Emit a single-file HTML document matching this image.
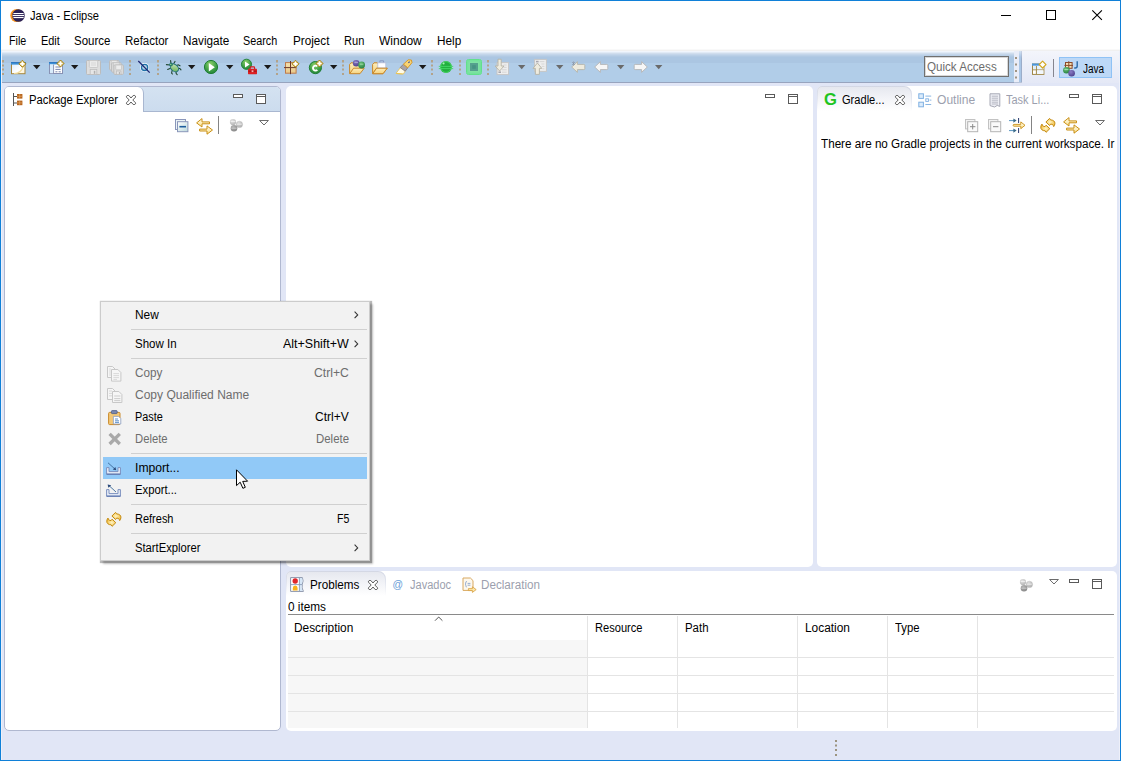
<!DOCTYPE html>
<html><head><meta charset='utf-8'><title>Java - Eclipse</title><style>
html,body{margin:0;padding:0}
body{width:1121px;height:761px;overflow:hidden;position:relative;background:#e1e6f6;font-family:"Liberation Sans", sans-serif;font-size:12px}
.a{position:absolute}
.t{position:absolute;white-space:pre;line-height:14px;transform-origin:0 0;display:block}
svg{position:absolute;overflow:visible}
.panel{position:absolute;background:#fff;border-radius:5px;box-sizing:border-box}
</style></head><body>
<div class="a" style="left:0px;top:0px;width:1121px;height:30px;background:#fff"></div>
<div class="a" style="left:0px;top:30px;width:1121px;height:20px;background:#fff"></div>
<div class="a" style="left:0px;top:49px;width:1121px;height:34px;background:linear-gradient(#f9f9f9 0px,#f9f9f9 1px,#f0f0f0 1px,#f0f0f0 2px,#f0f5fc 2px,#f0f5fc 3px,#e0eaf6 3px,#e0eaf6 4px,#cfdded 4px,#cfdded 5px,#c3d5ea 5px,#c3d5ea 6px,#b9cfe6 6px,#b9cfe6 7px,#b1c9e3 7px,#b1c9e3 8px,#abc6e2 8px,#abc6e2 14px,#b1cde8 14px,#b1cde8 33px,#98a4be 33px,#98a4be 34px)"></div>
<div class="a" style="left:1014px;top:51px;width:107px;height:32px;background:linear-gradient(#f3f5fb,#e4e8f6)"></div>
<div class="a" style="left:1014px;top:51px;width:5px;height:32px;background:#e9edf8"></div>
<div class="a" style="left:1019px;top:51px;width:2px;height:32px;background:linear-gradient(#d4e2f2,#a9c6e6 6px,#a9c6e6)"></div>
<div class="a" style="left:1021px;top:51px;width:1px;height:32px;background:linear-gradient(#c9d3e6,#9badc9 8px,#9badc9)"></div>
<div class="a" style="left:1014px;top:82px;width:8px;height:1px;background:#b9c4d8"></div>
<div class="panel" style="left:4px;top:86px;width:277px;height:645px;border:1px solid #b0b8d0;border-radius:5px 5px 5px 5px;background:#fff"></div>
<div class="a" style="left:5px;top:87px;width:275px;height:24px;background:linear-gradient(#d4e2f1,#ccdcee);border-bottom:1px solid #a9b7d0;border-radius:4px 4px 0 0;box-sizing:content-box"></div>
<div class="a" style="left:5px;top:87px;width:138px;height:25px;background:#fff;border-right:1px solid #a9b7d0;border-radius:4px 6px 0 0"></div>
<div class="panel" style="left:286px;top:86px;width:527px;height:481px;"></div>
<div class="panel" style="left:817px;top:86px;width:300px;height:481px;"></div>
<div class="a" style="left:817px;top:86px;width:95px;height:25px;background:linear-gradient(#d3d7e4,#e4e7f0 50%,#ffffff);border-radius:5px 8px 0 0"></div>
<div class="a" style="left:818px;top:87px;width:93px;height:24px;background:linear-gradient(#e6e8ef,#f3f4f8 50%,#ffffff);border-radius:4px 7px 0 0"></div>
<div class="panel" style="left:286px;top:571px;width:831px;height:160px;"></div>
<div class="a" style="left:286px;top:571px;width:100px;height:25px;background:linear-gradient(#d3d7e4,#e4e7f0 50%,#ffffff);border-radius:5px 8px 0 0"></div>
<div class="a" style="left:287px;top:572px;width:98px;height:24px;background:linear-gradient(#e6e8ef,#f3f4f8 50%,#ffffff);border-radius:4px 7px 0 0"></div>
<div class="a" style="left:288px;top:614px;width:826px;height:1px;background:#8a8a8a"></div>
<div class="a" style="left:288px;top:640px;width:299px;height:88px;background:#f7f7f7"></div>
<div class="a" style="left:288px;top:657px;width:826px;height:1px;background:#e4e4e4"></div>
<div class="a" style="left:288px;top:675px;width:826px;height:1px;background:#e4e4e4"></div>
<div class="a" style="left:288px;top:693px;width:826px;height:1px;background:#e4e4e4"></div>
<div class="a" style="left:288px;top:711px;width:826px;height:1px;background:#e4e4e4"></div>
<div class="a" style="left:587px;top:616px;width:1px;height:112px;background:#e4e4e4"></div>
<div class="a" style="left:677px;top:616px;width:1px;height:112px;background:#e4e4e4"></div>
<div class="a" style="left:797px;top:616px;width:1px;height:112px;background:#e4e4e4"></div>
<div class="a" style="left:887px;top:616px;width:1px;height:112px;background:#e4e4e4"></div>
<div class="a" style="left:977px;top:616px;width:1px;height:112px;background:#e4e4e4"></div>
<svg style="left:434px;top:616px" width="10" height="6" viewBox="0 0 10 6"><path d="M1 4.7 L4.7 1 L8.4 4.7" fill="none" stroke="#555" stroke-width="1"/></svg>
<div class="a" style="left:924px;top:56px;width:85px;height:21px;background:#fff;border:1px solid #707070;box-sizing:border-box;box-shadow:inset 0 0 0 1px #d8d8d8"></div>
<div class="a" style="left:1059px;top:57px;width:53px;height:21px;background:#bcd8f7;border:1px solid #8fc2f5;box-sizing:border-box"></div>
<div class="a" style="left:1053px;top:59px;width:1px;height:18px;background:#85858f"></div>
<svg width="0" height="0" style="left:0;top:0"><defs>
<radialGradient id="gG" cx="0.45" cy="0.3" r="0.75"><stop offset="0" stop-color="#8fd06a"/><stop offset="0.6" stop-color="#3fa047"/><stop offset="1" stop-color="#1f7f35"/></radialGradient>
<radialGradient id="gP" cx="0.4" cy="0.3" r="0.8"><stop offset="0" stop-color="#8a7cc4"/><stop offset="1" stop-color="#473a86"/></radialGradient>
<radialGradient id="gGr" cx="0.4" cy="0.3" r="0.8"><stop offset="0" stop-color="#6cc07a"/><stop offset="1" stop-color="#1f7a3a"/></radialGradient>
<linearGradient id="gFold" x1="0" y1="0" x2="0" y2="1"><stop offset="0" stop-color="#fdeebb"/><stop offset="1" stop-color="#f6d27c"/></linearGradient>
<linearGradient id="gWin" x1="0" y1="0" x2="1" y2="1"><stop offset="0" stop-color="#dcecfb"/><stop offset="0.6" stop-color="#ffffff"/><stop offset="1" stop-color="#fbf1cf"/></linearGradient>
<linearGradient id="gPk" x1="0" y1="0" x2="0" y2="1"><stop offset="0" stop-color="#f5e2ae"/><stop offset="1" stop-color="#e8c98a"/></linearGradient>
<linearGradient id="gCol" x1="0" y1="0" x2="1" y2="1"><stop offset="0" stop-color="#ffffff"/><stop offset="1" stop-color="#bcd9dc"/></linearGradient>
<linearGradient id="gBug" x1="0" y1="0" x2="1" y2="1"><stop offset="0" stop-color="#d8efc4"/><stop offset="1" stop-color="#5aa84a"/></linearGradient>
<radialGradient id="gBall1" cx="0.4" cy="0.3" r="0.8"><stop offset="0" stop-color="#dedede"/><stop offset="1" stop-color="#a8a8a8"/></radialGradient>
<radialGradient id="gBall2" cx="0.4" cy="0.3" r="0.8"><stop offset="0" stop-color="#b4b4b4"/><stop offset="1" stop-color="#828282"/></radialGradient>
<linearGradient id="gYel" x1="0" y1="0" x2="0" y2="1"><stop offset="0" stop-color="#fffdf0"/><stop offset="1" stop-color="#fbe08a"/></linearGradient>
<radialGradient id="gRef" cx="0.45" cy="0.45" r="0.6"><stop offset="0" stop-color="#fff4c4"/><stop offset="1" stop-color="#f2bc3a"/></radialGradient>
</defs></svg>
<svg style="left:10px;top:8px" width="16" height="16" viewBox="0 0 16 16"><circle cx="6.9" cy="7.5" r="6.6" fill="#f7941e"/><circle cx="8.5" cy="7.5" r="6.3" fill="#2c2255"/><rect x="3.4" y="5" width="10.2" height="1.1" fill="#fff"/><rect x="2.6" y="7" width="11.6" height="1.1" fill="#fff"/><rect x="3.4" y="9" width="10.2" height="1.1" fill="#fff"/></svg>
<svg style="left:1001px;top:10px" width="12" height="12" viewBox="0 0 12 12"><path d="M0 5.5 H10" stroke="#000" stroke-width="1"/></svg>
<svg style="left:1046px;top:10px" width="12" height="12" viewBox="0 0 12 12"><rect x="0.5" y="0.5" width="9" height="9" fill="none" stroke="#000" stroke-width="1"/></svg>
<svg style="left:1092px;top:10px" width="12" height="12" viewBox="0 0 12 12"><path d="M0.3 0.3 L9.9 9.9 M9.9 0.3 L0.3 9.9" stroke="#000" stroke-width="1.1"/></svg>
<svg style="left:2px;top:59.5px" width="3" height="16" viewBox="0 0 3 16"><rect x="0" y="0" width="2" height="2.5" fill="#b3a38a"/><rect x="0" y="4.5" width="2" height="2" fill="#b3a38a"/><rect x="0" y="8.5" width="2" height="2" fill="#b3a38a"/><rect x="0" y="13" width="2" height="2" fill="#b3a38a"/></svg>
<svg style="left:129px;top:59.5px" width="3" height="16" viewBox="0 0 3 16"><rect x="0" y="0" width="2" height="2.5" fill="#b3a38a"/><rect x="0" y="4.5" width="2" height="2" fill="#b3a38a"/><rect x="0" y="8.5" width="2" height="2" fill="#b3a38a"/><rect x="0" y="13" width="2" height="2" fill="#b3a38a"/></svg>
<svg style="left:157px;top:59.5px" width="3" height="16" viewBox="0 0 3 16"><rect x="0" y="0" width="2" height="2.5" fill="#b3a38a"/><rect x="0" y="4.5" width="2" height="2" fill="#b3a38a"/><rect x="0" y="8.5" width="2" height="2" fill="#b3a38a"/><rect x="0" y="13" width="2" height="2" fill="#b3a38a"/></svg>
<svg style="left:276px;top:59.5px" width="3" height="16" viewBox="0 0 3 16"><rect x="0" y="0" width="2" height="2.5" fill="#b3a38a"/><rect x="0" y="4.5" width="2" height="2" fill="#b3a38a"/><rect x="0" y="8.5" width="2" height="2" fill="#b3a38a"/><rect x="0" y="13" width="2" height="2" fill="#b3a38a"/></svg>
<svg style="left:342px;top:59.5px" width="3" height="16" viewBox="0 0 3 16"><rect x="0" y="0" width="2" height="2.5" fill="#b3a38a"/><rect x="0" y="4.5" width="2" height="2" fill="#b3a38a"/><rect x="0" y="8.5" width="2" height="2" fill="#b3a38a"/><rect x="0" y="13" width="2" height="2" fill="#b3a38a"/></svg>
<svg style="left:431px;top:59.5px" width="3" height="16" viewBox="0 0 3 16"><rect x="0" y="0" width="2" height="2.5" fill="#b3a38a"/><rect x="0" y="4.5" width="2" height="2" fill="#b3a38a"/><rect x="0" y="8.5" width="2" height="2" fill="#b3a38a"/><rect x="0" y="13" width="2" height="2" fill="#b3a38a"/></svg>
<svg style="left:459px;top:59.5px" width="3" height="16" viewBox="0 0 3 16"><rect x="0" y="0" width="2" height="2.5" fill="#b3a38a"/><rect x="0" y="4.5" width="2" height="2" fill="#b3a38a"/><rect x="0" y="8.5" width="2" height="2" fill="#b3a38a"/><rect x="0" y="13" width="2" height="2" fill="#b3a38a"/></svg>
<svg style="left:487px;top:59.5px" width="3" height="16" viewBox="0 0 3 16"><rect x="0" y="0" width="2" height="2.5" fill="#b3a38a"/><rect x="0" y="4.5" width="2" height="2" fill="#b3a38a"/><rect x="0" y="8.5" width="2" height="2" fill="#b3a38a"/><rect x="0" y="13" width="2" height="2" fill="#b3a38a"/></svg>
<svg style="left:33px;top:65px" width="8" height="5" viewBox="0 0 8 5"><path d="M0 0 H7.4 L3.7 4.3 Z" fill="#1a1a1a"/></svg>
<svg style="left:71px;top:65px" width="8" height="5" viewBox="0 0 8 5"><path d="M0 0 H7.4 L3.7 4.3 Z" fill="#1a1a1a"/></svg>
<svg style="left:188px;top:65px" width="8" height="5" viewBox="0 0 8 5"><path d="M0 0 H7.4 L3.7 4.3 Z" fill="#1a1a1a"/></svg>
<svg style="left:226px;top:65px" width="8" height="5" viewBox="0 0 8 5"><path d="M0 0 H7.4 L3.7 4.3 Z" fill="#1a1a1a"/></svg>
<svg style="left:264px;top:65px" width="8" height="5" viewBox="0 0 8 5"><path d="M0 0 H7.4 L3.7 4.3 Z" fill="#1a1a1a"/></svg>
<svg style="left:330px;top:65px" width="8" height="5" viewBox="0 0 8 5"><path d="M0 0 H7.4 L3.7 4.3 Z" fill="#1a1a1a"/></svg>
<svg style="left:419px;top:65px" width="8" height="5" viewBox="0 0 8 5"><path d="M0 0 H7.4 L3.7 4.3 Z" fill="#1a1a1a"/></svg>
<svg style="left:518px;top:65px" width="8" height="5" viewBox="0 0 8 5"><path d="M0 0 H7.4 L3.7 4.3 Z" fill="#6a6a6a"/></svg>
<svg style="left:556px;top:65px" width="8" height="5" viewBox="0 0 8 5"><path d="M0 0 H7.4 L3.7 4.3 Z" fill="#6a6a6a"/></svg>
<svg style="left:617px;top:65px" width="8" height="5" viewBox="0 0 8 5"><path d="M0 0 H7.4 L3.7 4.3 Z" fill="#6a6a6a"/></svg>
<svg style="left:655px;top:65px" width="8" height="5" viewBox="0 0 8 5"><path d="M0 0 H7.4 L3.7 4.3 Z" fill="#6a6a6a"/></svg>
<svg style="left:1015px;top:56.5px" width="2" height="22" viewBox="0 0 2 22"><rect x="0" y="0" width="2" height="2" fill="#a09482"/><rect x="0" y="6.5" width="2" height="2" fill="#a09482"/><rect x="0" y="13" width="2" height="2" fill="#a09482"/><rect x="0" y="19.5" width="2" height="2" fill="#a09482"/></svg>
<svg style="left:10px;top:59px" width="17" height="16" viewBox="0 0 17 16"><rect x="1.5" y="3.5" width="13.5" height="11.2" fill="url(#gWin)" stroke="#a8873c" stroke-width="1"/><rect x="1" y="3" width="14.5" height="2.6" fill="#3b8fd6"/><rect x="1" y="3" width="14.5" height="1" fill="#2f77c0"/><path d="M4 14.5 C9 14.5 12 12 13.5 7" fill="none" stroke="#f3dc9a" stroke-width="1.2"/><path d="M12.4 1.2999999999999998 L15.9 4.8 L12.4 8.3 L8.9 4.8 Z" fill="#d9b23c" stroke="#a6821a" stroke-width="1" stroke-linejoin="round"/><path d="M12.4 2.5999999999999996 V7.000000000000001 M10.200000000000001 4.8 H14.6" stroke="#ffffff" stroke-width="1.7" fill="none"/></svg>
<svg style="left:48px;top:59px" width="17" height="16" viewBox="0 0 17 16"><rect x="1.5" y="3.5" width="13" height="11" fill="#fff" stroke="#8892b4" stroke-width="1"/><rect x="1" y="3" width="14" height="2.4" fill="#3b8fd6"/><rect x="1" y="3" width="14" height="1" fill="#2f77c0"/><rect x="2" y="5.6" width="3" height="8.6" fill="#d9ecfb"/><path d="M5.6 5.6 V14.4" stroke="#8892b4" stroke-width="1"/><path d="M7.4 8 H12.6 M7.4 10.4 H12.6 M7.4 12.8 H9.4 M10.6 12.8 H12.8" stroke="#7886ad" stroke-width="1"/><path d="M12.5 1.0 L16.0 4.5 L12.5 8.0 L9.0 4.5 Z" fill="#d9b23c" stroke="#a6821a" stroke-width="1" stroke-linejoin="round"/><path d="M12.5 2.3 V6.7 M10.3 4.5 H14.7" stroke="#ffffff" stroke-width="1.7" fill="none"/></svg>
<svg style="left:86px;top:60px" width="15" height="15" viewBox="0 0 15 15"><rect x="0.5" y="0.5" width="14" height="14" rx="1" fill="#dedede" stroke="#bcbcbc" stroke-width="1"/><rect x="3.3" y="0.6" width="8.4" height="6.9" rx="0.8" fill="#ececec" stroke="#c4c4c4" stroke-width="0.8"/><rect x="4.2" y="9.45" width="6.6" height="4.95" fill="#e6e6e6" stroke="#bdbdbd" stroke-width="0.8"/><rect x="7.800000000000001" y="10.799999999999999" width="1.5" height="3.0" fill="#b0b0b0"/><path d="M5 3 H10 M5 5 H10" stroke="#cfcfcf" stroke-width="0.7"/></svg>
<svg style="left:109px;top:60px" width="15" height="15" viewBox="0 0 15 15"><rect x="0.5" y="0.5" width="9.5" height="9.5" rx="1" fill="#dedede" stroke="#bcbcbc" stroke-width="1"/><rect x="2.31" y="0.6" width="5.880000000000001" height="4.83" rx="0.8" fill="#ececec" stroke="#c4c4c4" stroke-width="0.8"/><rect x="2.9400000000000004" y="6.615" width="4.62" height="3.2849999999999997" fill="#e6e6e6" stroke="#bdbdbd" stroke-width="0.8"/><rect x="5.46" y="7.56" width="1.05" height="2.1" fill="#b0b0b0"/><rect x="2.7" y="2.7" width="9.5" height="9.5" rx="1" fill="#dedede" stroke="#bcbcbc" stroke-width="1"/><rect x="4.51" y="2.8000000000000003" width="5.880000000000001" height="4.83" rx="0.8" fill="#ececec" stroke="#c4c4c4" stroke-width="0.8"/><rect x="5.140000000000001" y="8.815000000000001" width="4.62" height="3.2849999999999997" fill="#e6e6e6" stroke="#bdbdbd" stroke-width="0.8"/><rect x="7.66" y="9.76" width="1.05" height="2.1" fill="#b0b0b0"/><rect x="4.9" y="4.9" width="9.5" height="9.5" rx="1" fill="#dedede" stroke="#bcbcbc" stroke-width="1"/><rect x="6.710000000000001" y="5.0" width="5.880000000000001" height="4.83" rx="0.8" fill="#ececec" stroke="#c4c4c4" stroke-width="0.8"/><rect x="7.340000000000001" y="11.015" width="4.62" height="3.2849999999999997" fill="#e6e6e6" stroke="#bdbdbd" stroke-width="0.8"/><rect x="9.86" y="11.96" width="1.05" height="2.1" fill="#b0b0b0"/></svg>
<svg style="left:137px;top:60px" width="14" height="14" viewBox="0 0 14 14"><circle cx="7.6" cy="7.4" r="4.4" fill="#fff"/><circle cx="7.6" cy="7.4" r="3.1" fill="#b5d6e6" stroke="#1f70a8" stroke-width="1.3"/><path d="M1.3 1 L12.7 12.6" stroke="#1c2370" stroke-width="1.2"/></svg>
<svg style="left:165px;top:59px" width="17" height="17" viewBox="0 0 17 17"><g stroke="#1f4630" stroke-width="1.1" fill="none" stroke-linecap="round"><path d="M6 4.8 L5.6 1.6"/><path d="M8.8 4.6 L10 2.4"/><path d="M5 6 L1.4 5.6"/><path d="M5.6 9.2 L2.6 10.4"/><path d="M7.2 11.4 L6.6 14 L7.4 15"/><path d="M11.6 6.4 L13.2 5.8 L15 6.8"/><path d="M13 9.2 L14.8 9.4 L16 10.8"/><path d="M11 12.6 L11.2 14.6 L12.2 15.6"/></g><ellipse cx="9.4" cy="8.8" rx="4.6" ry="3.3" transform="rotate(42 9.4 8.8)" fill="url(#gBug)" stroke="#1f6f7a" stroke-width="1"/><circle cx="6" cy="5.6" r="1.5" fill="#2f8f4a" stroke="#1f6f7a" stroke-width="0.7"/><circle cx="5.8" cy="5.2" r="0.5" fill="#e8ffe8"/></svg>
<svg style="left:203px;top:59px" width="16" height="16" viewBox="0 0 16 16"><circle cx="8" cy="8" r="6.6" fill="url(#gG)" stroke="#1f7f35" stroke-width="1"/><path d="M5.8 4 V12.6 L11.8 8.3 Z" fill="#fff"/></svg>
<svg style="left:240px;top:58px" width="18" height="17" viewBox="0 0 18 17"><circle cx="6.5" cy="6.3" r="5.1" fill="url(#gG)" stroke="#1f7f35" stroke-width="0.9"/><path d="M5 3.4 V9.4 L9.6 6.4 Z" fill="#fff"/><rect x="10.2" y="8.9" width="4.4" height="3" rx="0.8" fill="none" stroke="#d8181c" stroke-width="1.1"/><rect x="8" y="10.8" width="9" height="5.4" rx="0.6" fill="#dc1f22"/><path d="M8.4 13.2 H16.6" stroke="#8e0f12" stroke-width="0.8"/><rect x="11.6" y="12.3" width="1.8" height="1.8" fill="#f6b0b0"/></svg>
<svg style="left:283px;top:59px" width="17" height="16" viewBox="0 0 17 16"><rect x="2.5" y="3.6" width="10.6" height="10.6" fill="url(#gPk)" stroke="#bf7b4a" stroke-width="1"/><path d="M7.5 2 V15.2 M1 8.6 H13.2" stroke="#6e3a2a" stroke-width="1"/><path d="M12.5 1.2999999999999998 L16.0 4.8 L12.5 8.3 L9.0 4.8 Z" fill="#d9b23c" stroke="#a6821a" stroke-width="1" stroke-linejoin="round"/><path d="M12.5 2.5999999999999996 V7.000000000000001 M10.3 4.8 H14.7" stroke="#ffffff" stroke-width="1.7" fill="none"/></svg>
<svg style="left:308px;top:59px" width="17" height="16" viewBox="0 0 17 16"><circle cx="7.4" cy="8.6" r="6.1" fill="url(#gG)" stroke="#1f7f35" stroke-width="1"/><path d="M9.3 7.4 A2.5 2.5 0 1 0 9.3 10.8" fill="none" stroke="#fff" stroke-width="1.9"/><path d="M11.5 1.0 L15.0 4.5 L11.5 8.0 L8.0 4.5 Z" fill="#d9b23c" stroke="#a6821a" stroke-width="1" stroke-linejoin="round"/><path d="M11.5 2.3 V6.7 M9.3 4.5 H13.7" stroke="#ffffff" stroke-width="1.7" fill="none"/></svg>
<svg style="left:349px;top:59px" width="17" height="16" viewBox="0 0 17 16"><path d="M0.6 14.6 V5.4 L2 3.8000000000000003 H5.4 L6.6 5.2 H11.8 V8.6" fill="url(#gFold)" stroke="#c8872a" stroke-width="1" stroke-linejoin="round"/><path d="M0.7 14.7 L4.6 9.2 H15.2 L11 14.7 Z" fill="url(#gFold)" stroke="#c8872a" stroke-width="1" stroke-linejoin="round"/><circle cx="7.2" cy="4.2" r="3.3" fill="url(#gP)"/><path d="M5.4 3.4 H9" stroke="#b8b0e0" stroke-width="0.8"/><circle cx="12.6" cy="6" r="3.4" fill="url(#gGr)"/><path d="M10.8 5.2 H14.4" stroke="#a8e0b0" stroke-width="0.8"/></svg>
<svg style="left:372px;top:59px" width="17" height="16" viewBox="0 0 17 16"><path d="M0.6 14.6 V5.4 L2 3.8000000000000003 H5.4 L6.6 5.2 H11.8 V8.6" fill="url(#gFold)" stroke="#c8872a" stroke-width="1" stroke-linejoin="round"/><path d="M0.7 14.7 L4.6 9.2 H15.2 L11 14.7 Z" fill="url(#gFold)" stroke="#c8872a" stroke-width="1" stroke-linejoin="round"/><rect x="7.8" y="1.8" width="3.8" height="2.4" rx="0.8" fill="none" stroke="#8a9ac4" stroke-width="1.1"/><rect x="5.8" y="3.8" width="8" height="5.2" fill="#fdfdff" stroke="#b4bcd8" stroke-width="0.8"/><path d="M0.7 14.7 L4.6 9.2 H15.2 L11 14.7 Z" fill="url(#gFold)" stroke="#c8872a" stroke-width="1" stroke-linejoin="round"/></svg>
<svg style="left:395px;top:59px" width="18" height="16" viewBox="0 0 18 16"><path d="M1 14.4 L6 7.8 L10.6 11.4 L8.4 15 Z" fill="#fffbe8" stroke="#e8c050" stroke-width="0.8"/><path d="M5.2 8.6 L8.4 5.2 L12.8 8.8 L10.2 12.2 Z" fill="#a9a3a6" stroke="#807878" stroke-width="0.8"/><path d="M8.4 5.2 L13.2 0.8 L16.4 1 L17 3.6 L12.8 8.8 Z" fill="#f8d475" stroke="#d89a2a" stroke-width="1" stroke-linejoin="round"/><path d="M13.4 3.8 L14.6 2.6" stroke="#2a4a9a" stroke-width="1.2"/><path d="M1.4 14.6 L7.6 15" stroke="#f0c040" stroke-width="0.8"/></svg>
<svg style="left:438px;top:60px" width="16" height="14" viewBox="0 0 16 14"><circle cx="8" cy="7" r="5.9" fill="#22b03e"/><circle cx="8" cy="7" r="5.4" fill="none" stroke="#4fd868" stroke-width="1" opacity="0.8"/><path d="M0.8 6.4 H15.2 M0.8 8.6 H15.2" stroke="#46d868" stroke-width="0.9"/><circle cx="5.6" cy="3.6" r="1" fill="#c8ffd0" opacity="0.8"/></svg>
<svg style="left:466px;top:59px" width="16" height="16" viewBox="0 0 16 16"><rect x="0.5" y="0.5" width="15" height="15" rx="2" fill="#84e9a6" stroke="#62e08c" stroke-width="1"/><rect x="1.8" y="1.8" width="12.4" height="12.4" fill="#7fe2a4" stroke="#6adf94" stroke-width="0.8"/><rect x="4" y="4" width="8" height="8" fill="#55a08e"/><rect x="6.2" y="6.2" width="3.6" height="3.6" fill="#469383"/></svg>
<svg style="left:494px;top:58px" width="16" height="18" viewBox="0 0 16 18"><rect x="3" y="4.6" width="11.6" height="12" fill="#eeeeee" stroke="#c6c6c6" stroke-width="1"/><path d="M9.6 7 H12.6 M9.6 9.4 H12.6 M8 11.8 H12.6 M8 14.2 H12.6" stroke="#d2d2d2" stroke-width="0.9"/><rect x="4.4" y="13.4" width="2.6" height="1.6" fill="#a8a8b0"/><path d="M4 1.2 H7.2 V8 H10 L5.6 13 L1.2 8 H4 Z" fill="#efecdf" stroke="#b4b2a6" stroke-width="0.9" stroke-linejoin="round"/></svg>
<svg style="left:532px;top:58px" width="16" height="18" viewBox="0 0 16 18"><rect x="2.6" y="1.4" width="11.8" height="12" fill="#eeeeee" stroke="#c6c6c6" stroke-width="1"/><path d="M7.6 3.6 H12.4 M9.4 6 H12.4 M9.8 8.4 H12.4 M10.6 10.8 H12.4" stroke="#d2d2d2" stroke-width="0.9"/><rect x="4" y="2.8" width="2.6" height="1.6" fill="#a8a8b0"/><path d="M5.4 5 L9.8 10.4 H7.4 V16.4 H3.4 V10.4 H1 Z" fill="#efecdf" stroke="#b4b2a6" stroke-width="0.9" stroke-linejoin="round"/></svg>
<svg style="left:571px;top:61px" width="15" height="12" viewBox="0 0 15 12"><path d="M0.7 6 L6.4 0.6 V3.4 H12.8 Q13.8 3.4 13.8 4.4 V7.6 Q13.8 8.6 12.8 8.6 H6.4 V11.4 Z" fill="#eeebde" stroke="#b6b4a8" stroke-width="0.9" stroke-linejoin="round"/><path d="M1 1 L4 4 M4 1 L1 4 M2.5 0.4 V4.6" stroke="#8890a0" stroke-width="0.6"/></svg>
<svg style="left:594px;top:61px" width="15" height="12" viewBox="0 0 15 12"><path d="M0.7 6 L6.4 0.6 V3.4 H12.8 Q13.8 3.4 13.8 4.4 V7.6 Q13.8 8.6 12.8 8.6 H6.4 V11.4 Z" fill="#f6f6f6" stroke="#b4b4b4" stroke-width="0.9" stroke-linejoin="round"/></svg>
<svg style="left:633px;top:61px;transform:scaleX(-1)" width="15" height="12" viewBox="0 0 15 12"><path d="M0.7 6 L6.4 0.6 V3.4 H12.8 Q13.8 3.4 13.8 4.4 V7.6 Q13.8 8.6 12.8 8.6 H6.4 V11.4 Z" fill="#f6f6f6" stroke="#b4b4b4" stroke-width="0.9" stroke-linejoin="round"/></svg>
<svg style="left:1031px;top:60px" width="17" height="16" viewBox="0 0 17 16"><rect x="1.5" y="4" width="11.4" height="10.4" fill="#fff" stroke="#a08848" stroke-width="1"/><rect x="1" y="3.5" width="12.4" height="2.2" fill="#4a96dc"/><path d="M5.4 6 V14 M2 9.8 H12.6" stroke="#a08848" stroke-width="1"/><rect x="2.2" y="6.2" width="2.6" height="3" fill="#d9ecfb"/><rect x="6" y="6.2" width="6.4" height="3" fill="#e6f2fc"/><rect x="6" y="10.4" width="6.4" height="3.4" fill="#f1f7fd"/><path d="M11.6 1.2 L15 4.6 L11.6 8 L8.2 4.6 Z" fill="#fff" stroke="#d4a822" stroke-width="1.2" stroke-linejoin="round"/></svg>
<svg style="left:1062px;top:60px" width="18" height="17" viewBox="0 0 18 17"><rect x="3.5" y="2.5" width="6.6" height="5.8" fill="#f5e0b4" stroke="#8a4a2a" stroke-width="1"/><path d="M6.8 1.2 V8.6 M2.4 5.4 H11" stroke="#8a4a2a" stroke-width="1" fill="none"/><path d="M15.2 1.2 V6 Q15.2 8 13.2 8 H12.2" stroke="#2a6aa8" stroke-width="1.4" fill="none"/><circle cx="4.4" cy="10.3" r="3.3" fill="url(#gGr)"/><path d="M2.4 9.6 H6.4" stroke="#b8e8c0" stroke-width="0.8"/><circle cx="9.6" cy="13.3" r="3.3" fill="url(#gP)"/></svg>
<svg style="left:12px;top:92px" width="12" height="15" viewBox="0 0 12 15"><path d="M1.5 1 V14 M1.5 4.5 H5 M1.5 11 H5" stroke="#555" stroke-width="1" fill="none"/><rect x="5" y="2" width="5.4" height="4.6" fill="#b7651f"/><path d="M7.7 2 V6.6 M5 4.3 H10.4" stroke="#e8b070" stroke-width="0.6"/><rect x="5" y="8.6" width="5.4" height="4.6" fill="#b7651f"/><path d="M7.7 8.6 V13.2 M5 10.9 H10.4" stroke="#e8b070" stroke-width="0.6"/></svg>
<svg style="left:126px;top:95px" width="10" height="10" viewBox="0 0 10 10"><path d="M1.2 0.5 L2.8 0.5 L5 3 L7.2 0.5 L8.8 0.5 L9.5 1.2 L9.5 2.2 L6.8 5 L9.5 7.8 L9.5 8.8 L8.8 9.5 L7.2 9.5 L5 7 L2.8 9.5 L1.2 9.5 L0.5 8.8 L0.5 7.8 L3.2 5 L0.5 2.2 L0.5 1.2 Z" fill="#fff" stroke="#4a4a4a" stroke-width="0.9" stroke-linejoin="round"/></svg>
<svg style="left:233px;top:94px" width="10" height="4" viewBox="0 0 10 4"><rect x="0.5" y="0.5" width="9" height="3" fill="#fff" stroke="#5a5a5a" stroke-width="1"/></svg><svg style="left:256px;top:94px" width="10" height="10" viewBox="0 0 10 10"><rect x="0.5" y="0.5" width="9" height="9" fill="#fff" stroke="#5a5a5a" stroke-width="1"/><path d="M0.5 2.5 H9.5" stroke="#5a5a5a" stroke-width="1"/></svg>
<svg style="left:175px;top:119px" width="14" height="14" viewBox="0 0 14 14"><rect x="0.5" y="0.5" width="10" height="10" fill="#eaf3f6" stroke="#8a96ba" stroke-width="1"/><rect x="2.5" y="2.7" width="10.4" height="10" fill="url(#gCol)" stroke="#8a96ba" stroke-width="1"/><path d="M4.4 7.7 H11" stroke="#1d5c9c" stroke-width="1.6"/></svg>
<svg style="left:196px;top:117.5px" width="17" height="17" viewBox="0 0 17 17"><path d="M0.6 4.9 L6 0.6 L6 3.9 L13.5 3.9 L13.5 5.8 L6 5.8 L6 9 Z" fill="url(#gYel)" stroke="#c98f14" stroke-width="1" stroke-linejoin="round"/><path d="M16.5 12 L11 7.9 L11 11.1 L3.6 11.1 L3.6 13 L11 13 L11 16.2 Z" fill="url(#gYel)" stroke="#c98f14" stroke-width="1" stroke-linejoin="round"/></svg>
<svg style="left:218px;top:116px" width="1" height="18" viewBox="0 0 1 18"><rect x="0" y="0" width="1" height="18" fill="#848484"/></svg>
<svg style="left:228.5px;top:118px" width="15" height="14" viewBox="0 0 15 14"><circle cx="4" cy="4" r="3.1" fill="url(#gBall1)" opacity="0.9"/><circle cx="10.4" cy="6.4" r="3.2" fill="url(#gBall1)" stroke="#bdbdbd" stroke-width="0.4"/><circle cx="5" cy="10.3" r="3.3" fill="url(#gBall2)"/><path d="M2.4 10.2 H7.6" stroke="#d8d8d8" stroke-width="0.8"/><path d="M8 6.2 H12.8" stroke="#f4f4f4" stroke-width="0.8"/><path d="M1.6 3.6 H6.4" stroke="#f6f6f6" stroke-width="0.8"/></svg>
<svg style="left:259px;top:120px" width="10" height="6" viewBox="0 0 10 6"><path d="M0.6 0.5 H9.4 L5 5 Z" fill="#fff" stroke="#5a5a5a" stroke-width="0.9" stroke-linejoin="miter"/></svg>
<svg style="left:765px;top:94px" width="10" height="4" viewBox="0 0 10 4"><rect x="0.5" y="0.5" width="9" height="3" fill="#fff" stroke="#5a5a5a" stroke-width="1"/></svg><svg style="left:788px;top:94px" width="10" height="10" viewBox="0 0 10 10"><rect x="0.5" y="0.5" width="9" height="9" fill="#fff" stroke="#5a5a5a" stroke-width="1"/><path d="M0.5 2.5 H9.5" stroke="#5a5a5a" stroke-width="1"/></svg>
<span class="t" style="left:823.5px;top:91px;font-size:17px;font-weight:bold;color:#1fc41f;line-height:18px;transform:scaleX(0.98)">G</span>
<svg style="left:895px;top:95px" width="10" height="10" viewBox="0 0 10 10"><path d="M1.2 0.5 L2.8 0.5 L5 3 L7.2 0.5 L8.8 0.5 L9.5 1.2 L9.5 2.2 L6.8 5 L9.5 7.8 L9.5 8.8 L8.8 9.5 L7.2 9.5 L5 7 L2.8 9.5 L1.2 9.5 L0.5 8.8 L0.5 7.8 L3.2 5 L0.5 2.2 L0.5 1.2 Z" fill="#fff" stroke="#4a4a4a" stroke-width="0.9" stroke-linejoin="round"/></svg>
<svg style="left:918px;top:93px" width="15" height="15" viewBox="0 0 15 15"><rect x="0.8" y="0.8" width="4.6" height="4.6" fill="#dcecfb" stroke="#7fb0e2" stroke-width="1"/><rect x="0.8" y="9.2" width="4.6" height="4.6" fill="#dcecfb" stroke="#7fb0e2" stroke-width="1"/><rect x="7.8" y="5.8" width="2.6" height="2.6" fill="#fff" stroke="#7fb0e2" stroke-width="0.9"/><path d="M7.4 3.1 H13.2 M11.6 7.1 H13.4 M7.4 11.5 H13.2" stroke="#8ab6e2" stroke-width="1"/></svg>
<svg style="left:988.5px;top:93px" width="12" height="15" viewBox="0 0 12 15"><path d="M1 0.8 H10.8 V13.4 L8.2 12.4 L5.6 14 L1 12.6 Z" fill="#eeeff5" stroke="#a6a8b4" stroke-width="1" stroke-linejoin="round"/><path d="M2.8 3.2 H9 M2.8 5.2 H9 M2.8 7.2 H9 M2.8 9.2 H9 M2.8 11 H9" stroke="#a9acb8" stroke-width="0.8"/></svg>
<svg style="left:1069px;top:94px" width="10" height="4" viewBox="0 0 10 4"><rect x="0.5" y="0.5" width="9" height="3" fill="#fff" stroke="#5a5a5a" stroke-width="1"/></svg><svg style="left:1092px;top:94px" width="10" height="10" viewBox="0 0 10 10"><rect x="0.5" y="0.5" width="9" height="9" fill="#fff" stroke="#5a5a5a" stroke-width="1"/><path d="M0.5 2.5 H9.5" stroke="#5a5a5a" stroke-width="1"/></svg>
<svg style="left:965px;top:119px" width="14" height="14" viewBox="0 0 14 14"><rect x="0.5" y="0.5" width="9.4" height="9.4" fill="#f2f2f2" stroke="#c2c2c2" stroke-width="1"/><rect x="2.7" y="2.7" width="10" height="10" fill="#fafafa" stroke="#b4b4b4" stroke-width="1"/><path d="M5 7.7 H10.4 M7.7 5 V10.4" stroke="#8a8a8a" stroke-width="1"/></svg>
<svg style="left:988px;top:119px" width="14" height="14" viewBox="0 0 14 14"><rect x="0.5" y="0.5" width="9.4" height="9.4" fill="#f2f2f2" stroke="#c2c2c2" stroke-width="1"/><rect x="2.7" y="2.7" width="10" height="10" fill="#fafafa" stroke="#b4b4b4" stroke-width="1"/><path d="M5 7.7 H10.4" stroke="#8a8a8a" stroke-width="1"/></svg>
<svg style="left:1008px;top:117px" width="18" height="17" viewBox="0 0 18 17"><path d="M1 3.6 H7" stroke="#5a96c2" stroke-width="1"/><path d="M5.4 1.4 L8.6 3.6 L5.4 5.8 Z" fill="#3a6a88"/><path d="M10.6 1 V6" stroke="#2a3a6e" stroke-width="1"/><path d="M1 13.6 H7" stroke="#5a96c2" stroke-width="1"/><path d="M5.4 11.4 L8.6 13.6 L5.4 15.8 Z" fill="#3a6a88"/><path d="M10.6 11 V16" stroke="#2a3a6e" stroke-width="1"/><path d="M6 7.4 H12.8 V4.9 L17 8.3 L12.8 11.7 V9.2 H6 Q5.2 9.2 5.2 8.6 V8 Q5.2 7.4 6 7.4 Z" fill="url(#gYel)" stroke="#c98f14" stroke-width="0.9" stroke-linejoin="round"/></svg>
<svg style="left:1031px;top:116px" width="1" height="18" viewBox="0 0 1 18"><rect x="0" y="0" width="1" height="18" fill="#848484"/></svg>
<svg style="left:1041px;top:118px" width="15" height="15" viewBox="0 0 15 15"><path d="M4.9 4 L8.6 0.4 L9.6 1.9 C12 1.8 14.2 3.4 13.9 5.6 C13.8 7 13.3 7.8 12.7 8.6 C12.4 7.2 11.8 6.2 9.7 6.1 L8.6 7.5 Z" fill="url(#gRef)" stroke="#c48a10" stroke-width="1" stroke-linejoin="round"/><g transform="rotate(180 6.85 7.35)"><path d="M4.9 4 L8.6 0.4 L9.6 1.9 C12 1.8 14.2 3.4 13.9 5.6 C13.8 7 13.3 7.8 12.7 8.6 C12.4 7.2 11.8 6.2 9.7 6.1 L8.6 7.5 Z" fill="url(#gRef)" stroke="#c48a10" stroke-width="1" stroke-linejoin="round"/></g></svg>
<svg style="left:1062.5px;top:116.5px" width="17" height="17" viewBox="0 0 17 17"><path d="M0.6 4.9 L6 0.6 L6 3.9 L13.5 3.9 L13.5 5.8 L6 5.8 L6 9 Z" fill="url(#gYel)" stroke="#c98f14" stroke-width="1" stroke-linejoin="round"/><path d="M16.5 12 L11 7.9 L11 11.1 L3.6 11.1 L3.6 13 L11 13 L11 16.2 Z" fill="url(#gYel)" stroke="#c98f14" stroke-width="1" stroke-linejoin="round"/></svg>
<svg style="left:1095px;top:120px" width="10" height="6" viewBox="0 0 10 6"><path d="M0.6 0.5 H9.4 L5 5 Z" fill="#fff" stroke="#5a5a5a" stroke-width="0.9" stroke-linejoin="miter"/></svg>
<svg style="left:290px;top:577px" width="15" height="15" viewBox="0 0 15 15"><path d="M0.6 0.6 H12.4 Q13.8 4 12.2 7.4 Q11.4 11 13.4 14.4 H0.6 Z" fill="#fff" stroke="#8a94aa" stroke-width="1" stroke-linejoin="round"/><path d="M9.4 1 H12.2 Q13.2 4 11.8 7.4 Q11 11 12.6 14 H9.4 Z" fill="#d6e6f6"/><path d="M9.4 0.8 V14.2 M0.8 7.6 H12.2" stroke="#8a9ab8" stroke-width="0.9"/><circle cx="5.2" cy="4" r="2.7" fill="#e0262a"/><path d="M2.8 13.6 V11 Q2.8 8.6 5.2 8.4 Q7.6 8.6 7.6 11 V13.6 Z" fill="#f9b21c"/></svg>
<svg style="left:368px;top:580px" width="10" height="10" viewBox="0 0 10 10"><path d="M1.2 0.5 L2.8 0.5 L5 3 L7.2 0.5 L8.8 0.5 L9.5 1.2 L9.5 2.2 L6.8 5 L9.5 7.8 L9.5 8.8 L8.8 9.5 L7.2 9.5 L5 7 L2.8 9.5 L1.2 9.5 L0.5 8.8 L0.5 7.8 L3.2 5 L0.5 2.2 L0.5 1.2 Z" fill="#fff" stroke="#4a4a4a" stroke-width="0.9" stroke-linejoin="round"/></svg>
<span class="t" style="left:392.3px;top:576.8px;font-size:10.5px;font-style:italic;color:#6aa0d8;line-height:14px;transform:scaleX(1.0)">@</span>
<svg style="left:462px;top:577px" width="15" height="16" viewBox="0 0 15 16"><path d="M1 1 H8.4 L11 3.6 V13.4 H1 Z" fill="#fdf8ee" stroke="#d8a860" stroke-width="1" stroke-linejoin="round"/><path d="M4.8 4.4 Q3.6 4.4 3.8 6 Q3.8 7 3 7.2 Q3.8 7.4 3.8 8.4 Q3.6 10 4.8 10 M5.6 6.4 H8.4 M5.6 8.2 H8.4" stroke="#7a98c8" stroke-width="0.8" fill="none"/><path d="M6.4 11.6 H10.4 V9.8 L14.2 12.6 L10.4 15.4 V13.6 H6.4 Z" fill="#fbe6a8" stroke="#d8a040" stroke-width="0.8" stroke-linejoin="round"/></svg>
<svg style="left:1018.5px;top:577.5px" width="15" height="14" viewBox="0 0 15 14"><circle cx="4" cy="4" r="3.1" fill="url(#gBall1)" opacity="0.9"/><circle cx="10.4" cy="6.4" r="3.2" fill="url(#gBall1)" stroke="#bdbdbd" stroke-width="0.4"/><circle cx="5" cy="10.3" r="3.3" fill="url(#gBall2)"/><path d="M2.4 10.2 H7.6" stroke="#d8d8d8" stroke-width="0.8"/><path d="M8 6.2 H12.8" stroke="#f4f4f4" stroke-width="0.8"/><path d="M1.6 3.6 H6.4" stroke="#f6f6f6" stroke-width="0.8"/></svg>
<svg style="left:1049px;top:579px" width="10" height="6" viewBox="0 0 10 6"><path d="M0.6 0.5 H9.4 L5 5 Z" fill="#fff" stroke="#5a5a5a" stroke-width="0.9" stroke-linejoin="miter"/></svg>
<svg style="left:1069px;top:579px" width="10" height="4" viewBox="0 0 10 4"><rect x="0.5" y="0.5" width="9" height="3" fill="#fff" stroke="#5a5a5a" stroke-width="1"/></svg><svg style="left:1092px;top:579px" width="10" height="10" viewBox="0 0 10 10"><rect x="0.5" y="0.5" width="9" height="9" fill="#fff" stroke="#5a5a5a" stroke-width="1"/><path d="M0.5 2.5 H9.5" stroke="#5a5a5a" stroke-width="1"/></svg>
<svg style="left:835px;top:739.5px" width="2" height="17" viewBox="0 0 2 17"><rect x="0" y="0" width="2" height="2" fill="#9c9480"/><rect x="0" y="4.5" width="2" height="2" fill="#9c9480"/><rect x="0" y="9" width="2" height="2" fill="#9c9480"/><rect x="0" y="14" width="2" height="2" fill="#9c9480"/></svg>
<div class="a" style="left:100px;top:301px;width:270px;height:260px;background:#f2f2f2;border:1px solid #cccccc;box-sizing:border-box;box-shadow:1px 1px 1px 1px rgba(0,0,0,0.27),3px 3px 2px 0 rgba(0,0,0,0.22)"></div>
<div class="a" style="left:131px;top:329px;width:236px;height:1px;background:#d0d0d0"></div>
<div class="a" style="left:131px;top:358px;width:236px;height:1px;background:#d0d0d0"></div>
<div class="a" style="left:131px;top:453px;width:236px;height:1px;background:#d0d0d0"></div>
<div class="a" style="left:131px;top:504px;width:236px;height:1px;background:#d0d0d0"></div>
<div class="a" style="left:131px;top:533px;width:236px;height:1px;background:#d0d0d0"></div>
<div class="a" style="left:103px;top:457px;width:264px;height:22px;background:#91c9f7"></div>
<svg style="left:107px;top:366px" width="15" height="16" viewBox="0 0 15 16"><path d="M0.5 0.5 H5.5 L8.5 3.5 V11.5 H0.5 Z" fill="#f6f6f6" stroke="#c8c8c8" stroke-width="1" stroke-linejoin="round"/><path d="M4.5 3.5 H10.9 L13.9 6.5 V15.1 H4.5 Z" fill="#f6f6f6" stroke="#c8c8c8" stroke-width="1" stroke-linejoin="round"/><path d="M6.4 7.6 H12 M6.4 9.6 H12 M6.4 11.6 H12 M6.4 13.4 H10" stroke="#d0d0d0" stroke-width="0.8"/><path d="M2 3 H4 M2 5 H4 M2 7 H4 M2 9 H4" stroke="#d4d4d4" stroke-width="0.8"/></svg>
<svg style="left:107px;top:388px" width="16" height="16" viewBox="0 0 16 16"><path d="M0.5 0.5 H5.5 L8.5 3.5 V11.5 H0.5 Z" fill="#f6f6f6" stroke="#c8c8c8" stroke-width="1" stroke-linejoin="round"/><path d="M5.5 3.5 H11.9 L14.9 6.5 V14.5 H5.5 Z" fill="#f6f6f6" stroke="#c8c8c8" stroke-width="1" stroke-linejoin="round"/><path d="M2 3 H5 M2 5.4 H5 M2 7.8 H5" stroke="#d0d0d0" stroke-width="0.8"/><path d="M7.2 8 H13.4 M7.2 10.6 H13.4 M7.2 12.6 H13.4" stroke="#cccccc" stroke-width="1"/></svg>
<svg style="left:108px;top:410px" width="14" height="16" viewBox="0 0 14 16"><rect x="0.6" y="2.4" width="11.4" height="12.2" rx="1" fill="#f3c878" stroke="#c98a2a" stroke-width="1"/><rect x="3.4" y="0.6" width="5.8" height="3" rx="0.8" fill="#7a88b0" stroke="#4a5a88" stroke-width="0.8"/><path d="M5.4 6.4 H10.6 L12.8 8.6 V14 H5.4 Z" fill="#fff" stroke="#8aa0c8" stroke-width="0.8" stroke-linejoin="round"/><path d="M7 9 H10 M7 10.8 H11 M7 12.4 H11" stroke="#3a78c0" stroke-width="0.8"/></svg>
<svg style="left:108px;top:432px" width="14" height="14" viewBox="0 0 14 14"><path d="M1.6 1.8 L11.8 12 M11.8 1.8 L1.6 12" stroke="#a9a9a9" stroke-width="3.3" stroke-linecap="butt"/></svg>
<svg style="left:106px;top:462px" width="15" height="13" viewBox="0 0 15 13"><path d="M0.6 5.6 V12.2 H14.4 V5.6 H12 V9.6 H3 V5.6 Z" fill="#e8eef8" stroke="#7b90bf" stroke-width="1" stroke-linejoin="miter"/><path d="M0.6 12.2 H14.4" stroke="#5f78b0" stroke-width="1.2"/><path d="M2 0.8 L9.6 7.6" stroke="#3a6a9a" stroke-width="0.9"/><path d="M10.2 8.2 L6.8 7.4 L9.4 5 Z" fill="#2a4a7a"/></svg>
<svg style="left:106px;top:484px" width="15" height="13" viewBox="0 0 15 13"><path d="M0.6 5.6 V12.2 H14.4 V5.6 H12 V9.6 H3 V5.6 Z" fill="#e8eef8" stroke="#7b90bf" stroke-width="1" stroke-linejoin="miter"/><path d="M0.6 12.2 H14.4" stroke="#5f78b0" stroke-width="1.2"/><path d="M10 8 L2.8 1.4" stroke="#3a6a9a" stroke-width="0.9"/><path d="M1.6 0.4 L5.2 1.2 L2.4 3.8 Z" fill="#2a4a7a"/></svg>
<svg style="left:107px;top:512px" width="15" height="15" viewBox="0 0 15 15"><path d="M4.9 4 L8.6 0.4 L9.6 1.9 C12 1.8 14.2 3.4 13.9 5.6 C13.8 7 13.3 7.8 12.7 8.6 C12.4 7.2 11.8 6.2 9.7 6.1 L8.6 7.5 Z" fill="url(#gRef)" stroke="#c48a10" stroke-width="1" stroke-linejoin="round"/><g transform="rotate(180 6.85 7.35)"><path d="M4.9 4 L8.6 0.4 L9.6 1.9 C12 1.8 14.2 3.4 13.9 5.6 C13.8 7 13.3 7.8 12.7 8.6 C12.4 7.2 11.8 6.2 9.7 6.1 L8.6 7.5 Z" fill="url(#gRef)" stroke="#c48a10" stroke-width="1" stroke-linejoin="round"/></g></svg>
<svg style="left:353.5px;top:310.5px" width="5" height="8" viewBox="0 0 5 8"><path d="M0.6 0.7 L3.7 3.9 L0.6 7.1" fill="none" stroke="#333" stroke-width="1.1"/></svg>
<svg style="left:353.5px;top:339.5px" width="5" height="8" viewBox="0 0 5 8"><path d="M0.6 0.7 L3.7 3.9 L0.6 7.1" fill="none" stroke="#333" stroke-width="1.1"/></svg>
<svg style="left:353.5px;top:543.5px" width="5" height="8" viewBox="0 0 5 8"><path d="M0.6 0.7 L3.7 3.9 L0.6 7.1" fill="none" stroke="#333" stroke-width="1.1"/></svg>
<span class="t" style="left:30px;top:9px;color:#000;font-size:12px;transform:scaleX(0.9237);">Java - Eclipse</span>
<span class="t" style="left:8.8px;top:34px;color:#000;font-size:12px;transform:scaleX(0.8943);">File</span>
<span class="t" style="left:40.7px;top:34px;color:#000;font-size:12px;transform:scaleX(0.9088);">Edit</span>
<span class="t" style="left:73.9px;top:34px;color:#000;font-size:12px;transform:scaleX(0.9571);">Source</span>
<span class="t" style="left:124.6px;top:34px;color:#000;font-size:12px;transform:scaleX(0.9568);">Refactor</span>
<span class="t" style="left:182.6px;top:34px;color:#000;font-size:12px;transform:scaleX(0.9794);">Navigate</span>
<span class="t" style="left:243.3px;top:34px;color:#000;font-size:12px;transform:scaleX(0.8993);">Search</span>
<span class="t" style="left:292.5px;top:34px;color:#000;font-size:12px;transform:scaleX(0.9770);">Project</span>
<span class="t" style="left:343.5px;top:34px;color:#000;font-size:12px;transform:scaleX(0.9221);">Run</span>
<span class="t" style="left:378.8px;top:34px;color:#000;font-size:12px;transform:scaleX(1.0026);">Window</span>
<span class="t" style="left:436.6px;top:34px;color:#000;font-size:12px;transform:scaleX(0.9803);">Help</span>
<span class="t" style="left:29px;top:93px;color:#000;font-size:12px;transform:scaleX(0.9396);">Package Explorer</span>
<span class="t" style="left:927.3px;top:60px;color:#6d6d6d;font-size:12px;transform:scaleX(0.9676);">Quick Access</span>
<span class="t" style="left:1083px;top:62px;color:#000;font-size:12px;transform:scaleX(0.8360);">Java</span>
<span class="t" style="left:841.7px;top:93px;color:#000;font-size:12px;transform:scaleX(0.9233);">Gradle...</span>
<span class="t" style="left:936.8px;top:93px;color:#9c9fae;font-size:12px;transform:scaleX(1.0044);">Outline</span>
<span class="t" style="left:1005.7px;top:93px;color:#9c9fae;font-size:12px;transform:scaleX(0.9143);">Task Li...</span>
<span class="t" style="left:821px;top:137px;color:#000;font-size:12px;transform:scaleX(0.9732);">There are no Gradle projects in the current workspace. Ir</span>
<span class="t" style="left:310px;top:578px;color:#000;font-size:12px;transform:scaleX(0.9726);">Problems</span>
<span class="t" style="left:409.5px;top:578px;color:#9c9fae;font-size:12px;transform:scaleX(0.9194);">Javadoc</span>
<span class="t" style="left:481px;top:578px;color:#9c9fae;font-size:12px;transform:scaleX(0.9736);">Declaration</span>
<span class="t" style="left:288.1px;top:600px;color:#000;font-size:12px;transform:scaleX(0.9822);">0 items</span>
<span class="t" style="left:294.3px;top:621px;color:#000;font-size:12px;transform:scaleX(0.9878);">Description</span>
<span class="t" style="left:594.7px;top:621px;color:#000;font-size:12px;transform:scaleX(0.9249);">Resource</span>
<span class="t" style="left:684.7px;top:621px;color:#000;font-size:12px;transform:scaleX(0.9519);">Path</span>
<span class="t" style="left:804.7px;top:621px;color:#000;font-size:12px;transform:scaleX(0.9917);">Location</span>
<span class="t" style="left:894.7px;top:621px;color:#000;font-size:12px;transform:scaleX(0.9417);">Type</span>
<span class="t" style="left:135px;top:308px;color:#000;font-size:12px;transform:scaleX(0.9910);">New</span>
<span class="t" style="left:135px;top:337px;color:#000;font-size:12px;transform:scaleX(0.9594);">Show In</span>
<span class="t" style="left:283.2px;top:337px;color:#000;font-size:12px;transform:scaleX(1.0385);">Alt+Shift+W</span>
<span class="t" style="left:135px;top:366px;color:#6d6d6d;font-size:12px;transform:scaleX(0.9745);">Copy</span>
<span class="t" style="left:314.2px;top:366px;color:#6d6d6d;font-size:12px;transform:scaleX(1.0133);">Ctrl+C</span>
<span class="t" style="left:135px;top:388px;color:#6d6d6d;font-size:12px;transform:scaleX(1.0012);">Copy Qualified Name</span>
<span class="t" style="left:135px;top:410px;color:#000;font-size:12px;transform:scaleX(0.9059);">Paste</span>
<span class="t" style="left:315.3px;top:410px;color:#000;font-size:12px;transform:scaleX(1.0004);">Ctrl+V</span>
<span class="t" style="left:135px;top:432px;color:#6d6d6d;font-size:12px;transform:scaleX(0.9398);">Delete</span>
<span class="t" style="left:316px;top:432px;color:#6d6d6d;font-size:12px;transform:scaleX(0.9514);">Delete</span>
<span class="t" style="left:135px;top:461px;color:#000;font-size:12px;transform:scaleX(1.0133);">Import...</span>
<span class="t" style="left:135px;top:483px;color:#000;font-size:12px;transform:scaleX(0.9399);">Export...</span>
<span class="t" style="left:135px;top:512px;color:#000;font-size:12px;transform:scaleX(0.9160);">Refresh</span>
<span class="t" style="left:336.7px;top:512px;color:#000;font-size:12px;transform:scaleX(0.8776);">F5</span>
<span class="t" style="left:135px;top:541px;color:#000;font-size:12px;transform:scaleX(0.9353);">StartExplorer</span>
<svg style="left:235px;top:468px" width="14" height="22" viewBox="-1 -1 14 22"><path d="M0.5 0.8 L0.5 16.6 L4.2 13.2 L6.9 19.3 L9.3 18.3 L6.7 12.4 L11.6 12.2 Z" fill="#fff" stroke="#000" stroke-width="1" stroke-linejoin="miter"/></svg>
<div class="a" style="left:1px;top:51px;width:1px;height:709px;background:#eef0f9"></div>
<div class="a" style="left:1119px;top:51px;width:1px;height:709px;background:#eef0f9"></div>
<div class="a" style="left:0px;top:0px;width:1121px;height:761px;border:1px solid #1080d8;box-sizing:border-box;pointer-events:none"></div>
</body></html>
